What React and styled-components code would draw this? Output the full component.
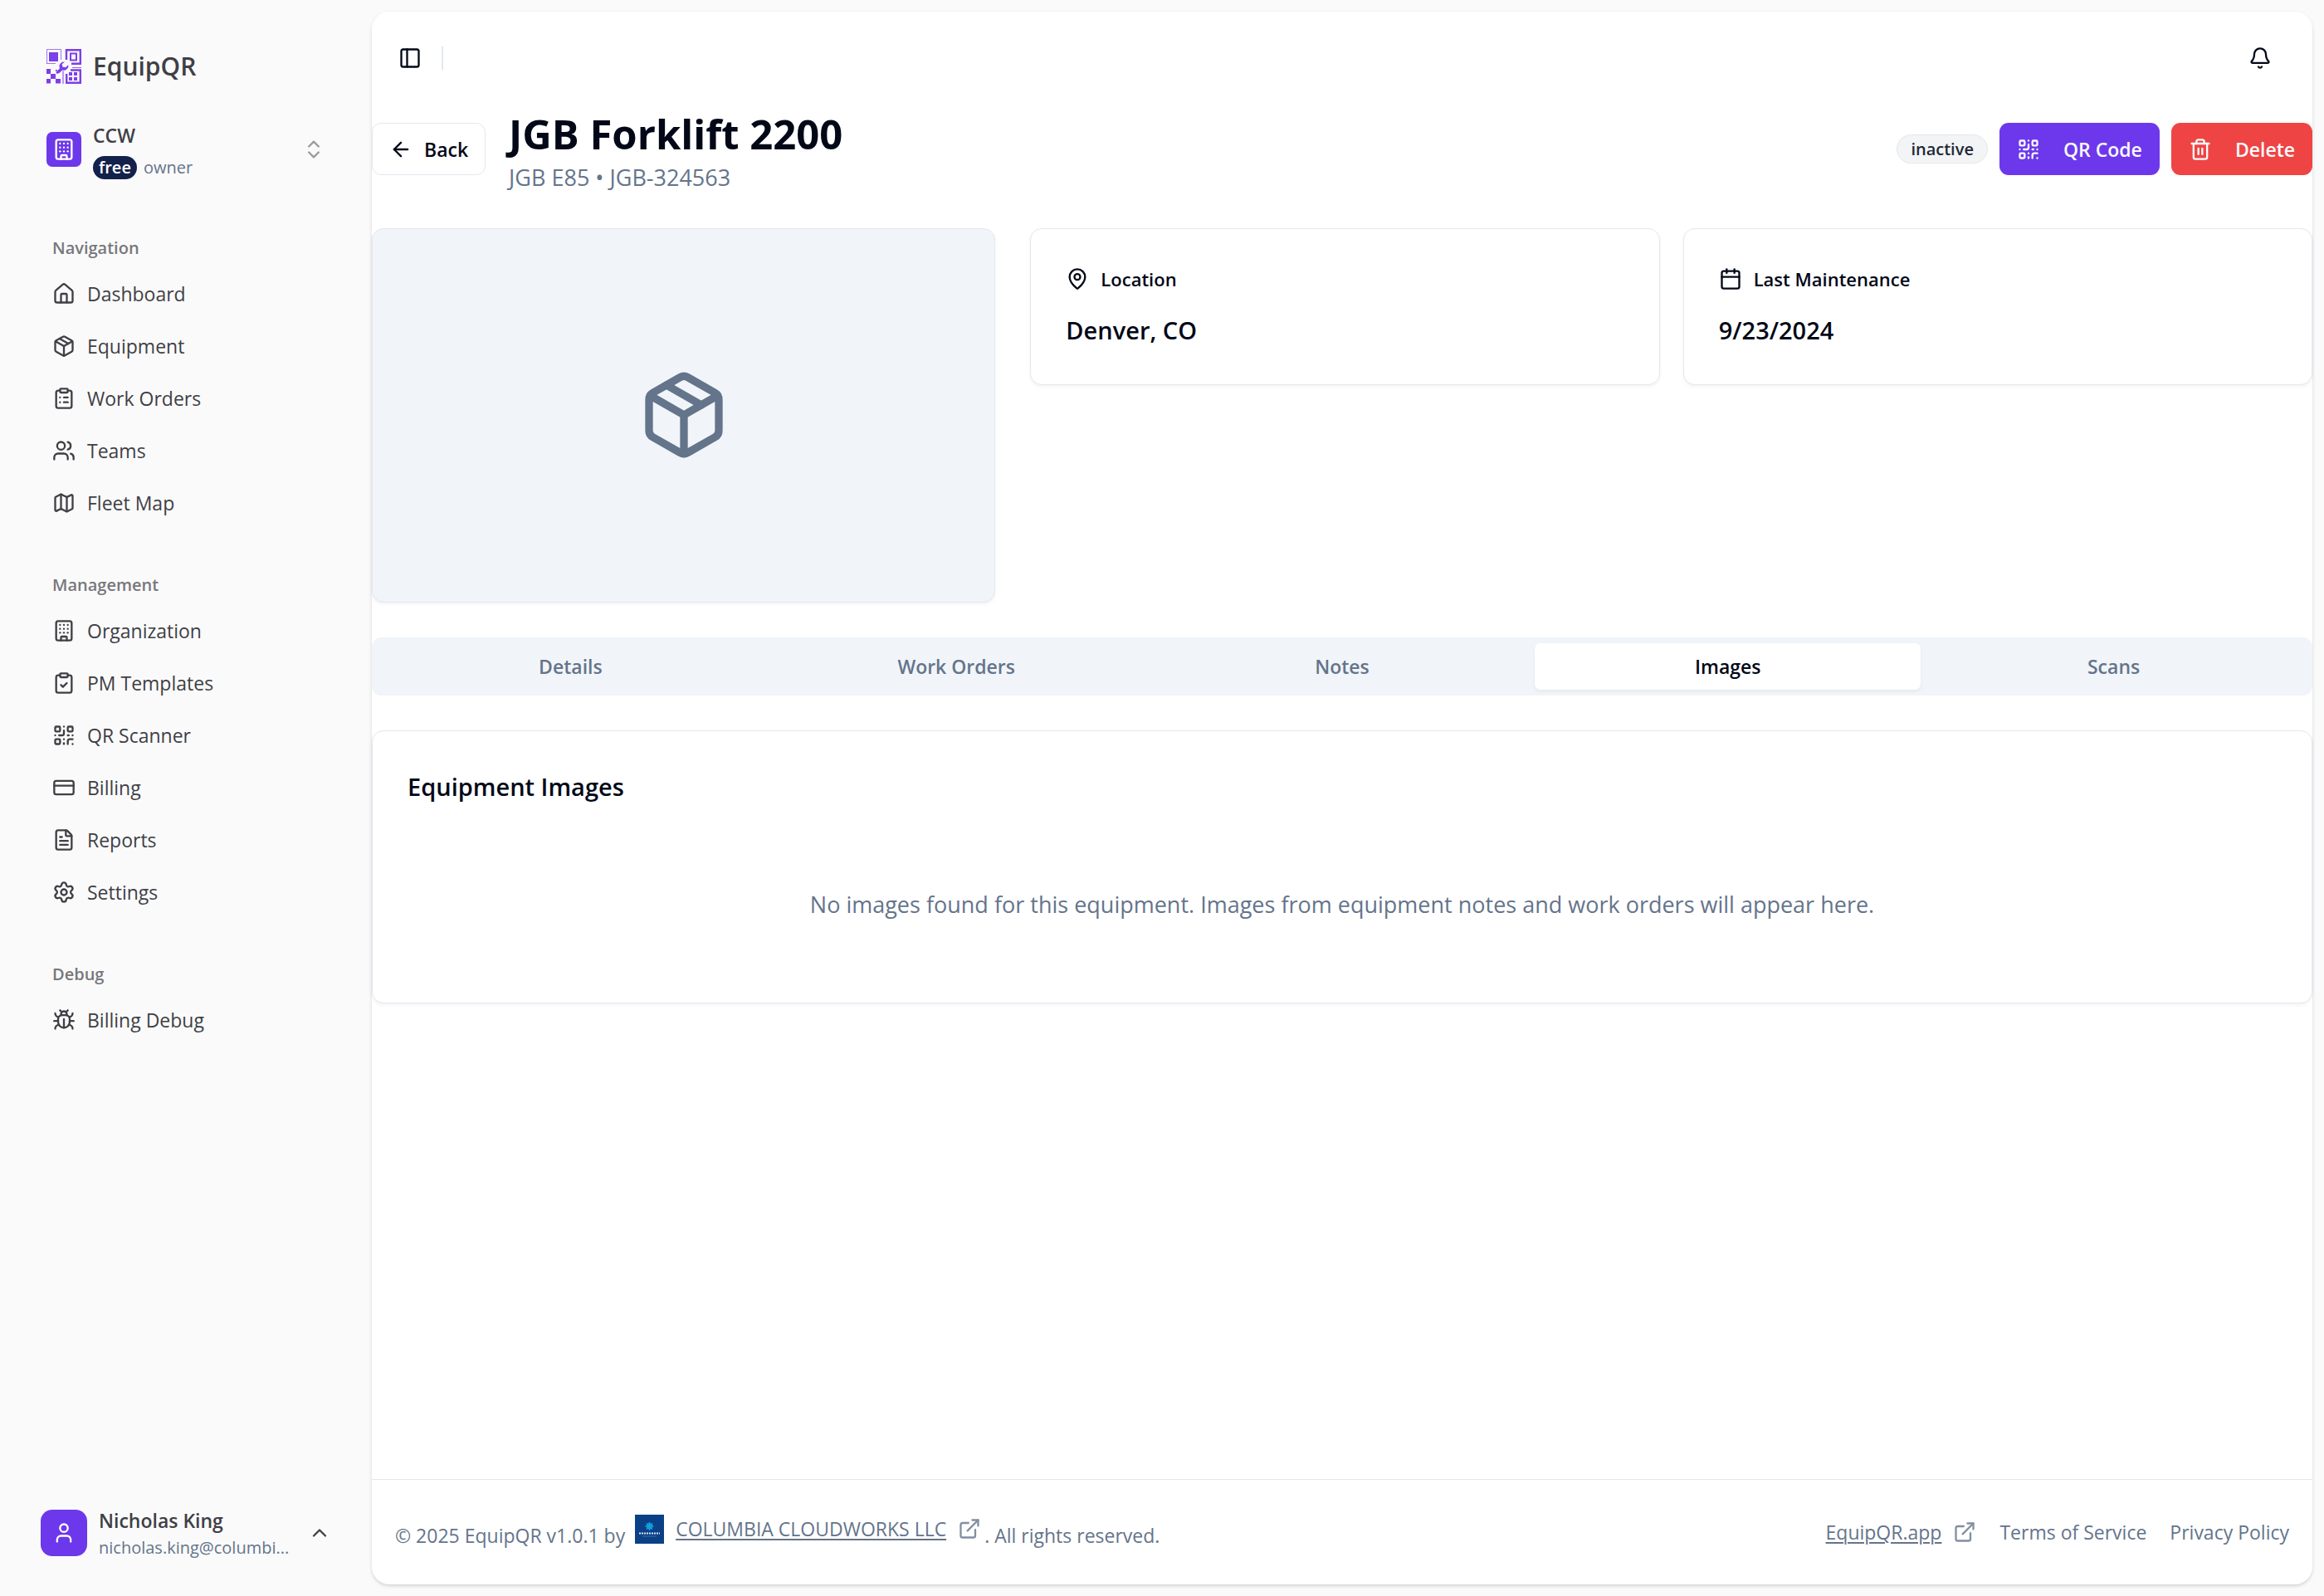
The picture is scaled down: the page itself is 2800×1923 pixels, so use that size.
import React from "react";
import styled, { createGlobalStyle, css } from "styled-components";
import {
  House, Package, ClipboardList, Users, Map, Building, ClipboardCheck, QrCode, CreditCard,
  FileText, Settings, Bug, PanelLeft, Bell, ArrowLeft, Trash2, MapPin, Calendar,
  ChevronsUpDown, ChevronUp, User, ExternalLink,
} from "lucide-react";

const c = {
  page: "#fafafa",
  side: "#3f3f46",
  text: "#020817",
  muted: "#64748b",
  border: "#e2e8f0",
  soft: "#f1f5f9",
  primary: "#6d38eb",
  danger: "#ef4444",
};

const GlobalStyle = createGlobalStyle`
  *, *::before, *::after { box-sizing: border-box; }
  body {
    margin: 0;
    background: ${c.page};
    color: ${c.text};
    font-family: "Open Sans", "Noto Sans", sans-serif;
    font-size: 27px;
    line-height: 42px;
  }
  h1, h2, h3, p, ul { margin: 0; padding: 0; }
  button { font: inherit; color: inherit; border: 0; background: none; padding: 0; text-align: left; }
  a { color: inherit; text-decoration: none; }
  svg { flex: none; display: block; }
`;

const Shell = styled.div`
  display: flex;
  min-height: 100vh;
`;

/* Sidebar */
const Sidebar = styled.aside`
  display: flex;
  flex-direction: column;
  flex: none;
  width: 448px;
  padding: 45px 42px 43px 49px;
  color: ${c.side};
`;
const Brand = styled.a`
  display: flex;
  align-items: center;
  gap: 14px;
  height: 70px;
  padding-left: 7px;
  font-size: 30px;
  font-weight: 600;
`;
const OrgButton = styled.button`
  display: flex;
  align-items: center;
  gap: 14px;
  height: 84px;
  margin-top: 23px;
  padding: 0 14px 0 7px;
`;
const Tile = styled.span`
  display: grid;
  place-items: center;
  flex: none;
  width: ${(p) => p.$size}px;
  height: ${(p) => p.$size}px;
  border-radius: ${(p) => p.$radius}px;
  background: ${c.primary};
  color: #fff;
`;
const Lines = styled.span`
  display: flex;
  flex-direction: column;
  gap: ${(p) => p.$gap || 0}px;
  flex: 1;
  min-width: 0;
`;
const OrgName = styled.span`
  font-size: 23px;
  font-weight: 600;
  line-height: 36px;
`;
const OrgMeta = styled.span`
  display: flex;
  align-items: center;
  gap: 8px;
  color: ${c.muted};
  font-size: 20px;
  font-weight: 500;
  line-height: 28px;
`;
const PlanBadge = styled.span`
  padding: 0 7px;
  border-radius: 14px;
  background: #13214b;
  color: #fff;
  font-weight: 600;
`;
const NavGroups = styled.nav`
  display: flex;
  flex-direction: column;
  gap: 42px;
  margin-top: 48px;
`;
const GroupLabel = styled.h2`
  height: 56px;
  padding-left: 14px;
  color: #77777c;
  font-size: 20px;
  font-weight: 600;
  line-height: 58px;
`;
const NavList = styled.ul`
  display: grid;
  gap: 7px;
  list-style: none;
`;
const NavLink = styled.a`
  display: flex;
  align-items: center;
  gap: 14px;
  height: 56px;
  padding: 0 14px;
  font-size: 23px;
`;
const UserButton = styled.button`
  display: flex;
  align-items: center;
  gap: 14px;
  margin-top: auto;
  padding-right: 7px;
`;
const UserName = styled.span`
  font-size: 23px;
  font-weight: 600;
  line-height: 36px;
`;
const UserMail = styled.span`
  color: ${c.muted};
  font-size: 20px;
  line-height: 30px;
  white-space: nowrap;
`;

/* Main panel */
const Panel = styled.div`
  display: flex;
  flex: 1;
  flex-direction: column;
  min-width: 0;
  margin: 14px 14px 14px 0;
  border-radius: 21px;
  background: #fff;
  box-shadow: 0 2px 5px rgba(0, 0, 0, 0.1), 0 2px 4px -2px rgba(0, 0, 0, 0.15);
`;
const TopBar = styled.header`
  display: flex;
  align-items: center;
  gap: 24px;
  height: 112px;
  padding: 0 49px 0 32px;
`;
const Divider = styled.span`
  width: 2px;
  height: 28px;
  background: ${c.border};
`;
const IconButton = styled.button`
  ${(p) => p.$end && css`margin-left: auto;`}
`;
const Content = styled.main`
  display: flex;
  flex: 1;
  flex-direction: column;
  gap: 42px;
`;
const TitleRow = styled.div`
  display: flex;
  align-items: center;
  gap: 28px;
  height: 107px;
`;
const Actions = styled.div`
  display: flex;
  align-items: center;
  gap: 14px;
  margin-left: auto;
`;
const Title = styled.h1`
  font-size: 49px;
  font-weight: 700;
  line-height: 68px;
`;
const Subtitle = styled.p`
  color: ${c.muted};
  line-height: 38px;
`;
const tones = {
  outline: css`border: 1px solid ${c.border}; background: #fff; gap: 14px; padding: 0 20px;`,
  primary: css`background: ${c.primary}; color: #f8fafc;`,
  danger: css`background: ${c.danger}; color: #f8fafc;`,
};
const Button = styled.button`
  display: flex;
  align-items: center;
  gap: 28px;
  height: 63px;
  padding: 0 21px;
  border-radius: 11px;
  font-size: 23px;
  font-weight: 600;
  white-space: nowrap;
  ${(p) => tones[p.$tone]}
`;
const StatusBadge = styled.span`
  padding: 0 16px;
  border: 1px solid #e5e7eb;
  border-radius: 18px;
  background: #f3f4f6;
  color: #1f2937;
  font-size: 20px;
  font-weight: 600;
  line-height: 33px;
`;
const cardFrame = css`
  border: 1px solid ${c.border};
  border-radius: 14px;
  box-shadow: 0 2px 4px rgba(0, 0, 0, 0.05);
`;
const Overview = styled.section`
  display: grid;
  grid-template-columns: repeat(3, minmax(0, 1fr));
  gap: 42px;
`;
const Placeholder = styled.div`
  ${cardFrame}
  display: grid;
  place-items: center;
  aspect-ratio: 5 / 3;
  background: ${c.soft};
  color: ${c.muted};
`;
const Facts = styled.div`
  display: grid;
  grid-column: span 2;
  grid-template-columns: 1fr 1fr;
  align-items: start;
  gap: 28px;
`;
const Card = styled.section`
  ${cardFrame}
  padding: 42px;
  background: #fff;
`;
const FactLabel = styled.h3`
  display: flex;
  align-items: center;
  gap: 14px;
  font-size: 22px;
  font-weight: 600;
  line-height: 36px;
`;
const FactValue = styled.p`
  margin-top: 20px;
  font-size: 29px;
  font-weight: 600;
  line-height: 47px;
`;
const TabList = styled.div`
  display: grid;
  grid-template-columns: repeat(5, 1fr);
  padding: 7px;
  border-radius: 11px;
  background: ${c.soft};
`;
const Tab = styled.button`
  height: 56px;
  border-radius: 7px;
  color: ${c.muted};
  font-size: 23px;
  font-weight: 600;
  text-align: center;
  ${(p) => p["aria-selected"] && css`
    background: #fff;
    color: ${c.text};
    box-shadow: 0 2px 4px rgba(0, 0, 0, 0.06);
  `}
`;
const CardTitle = styled.h2`
  font-size: 29px;
  font-weight: 600;
  line-height: 50px;
`;
const Empty = styled.p`
  padding: 96px 0 55px;
  color: ${c.muted};
  text-align: center;
`;
const Footer = styled.footer`
  display: flex;
  align-items: center;
  justify-content: space-between;
  height: 127px;
  padding: 0 28px;
  border-top: 1px solid ${c.border};
  color: ${c.muted};
  font-size: 23px;
`;
const Copyright = styled.p`
  display: flex;
  align-items: flex-end;
  line-height: 38px;
`;
const CompanyLink = styled.a`
  display: flex;
  align-items: center;
  gap: 14px;
  margin: 0 4px 8px 12px;
`;
const FooterLinks = styled.nav`
  display: flex;
  gap: 28px;
`;
const OutLink = styled.a`
  display: flex;
  align-items: center;
  gap: 14px;
`;
const Underlined = styled.span`
  text-decoration: underline;
  text-decoration-thickness: 2px;
  text-underline-offset: 3px;
`;

const BrandMark = () => (
  <svg width="42" height="42" viewBox="0 0 42 42" fill="#7c3fe8" aria-hidden="true">
    <path d="M.500 18V.500H17.500V13M.500 17.500H11" fill="none" stroke="#7c3fe8" opacity="0.7" />
    <path d="M3 4h11v11H3z" />
    <path d="M24 13V1.200H40.800V17.800H30" fill="none" stroke="#7c3fe8" strokeWidth="2.400" />
    <path d="M29 5.500h7v8h-7z" fill="none" stroke="#7c3fe8" strokeWidth="2" />
    <path d="M31 22.500H42" fill="none" stroke="#7c3fe8" opacity="0.8" />
    <path d="M29 25.500H40.800V40.800H24.200V30" fill="none" stroke="#7c3fe8" strokeWidth="2.400" />
    <path d="M27 28h4v4h-4zM33 28h4v4h-4zM27 34h4v4h-4zM33 34h4v4h-4zM19.500 25v17h1V25z" />
    <path d="M0 24h5v6H0zM5 30h6v6H5zM0 36h5v5.500H0zM11 36h6v5.500h-6zM11 25h3v4h-3z" />
    <path d="M23 15.500a6 6 0 0 0-7.500 8L11 28l1.500 2.500L16 29l3-3a6 6 0 0 0 7.500-7.500l-3.500 3.300-3.300-.6-.6-3z" stroke="#fafafa" strokeWidth="0.800" />
  </svg>
);

const CompanyMark = () => (
  <svg width="35" height="35" viewBox="0 0 35 35" aria-hidden="true">
    <rect width="35" height="35" fill="#0a4186" />
    <g stroke="#16a0e0" strokeWidth="1.300" fill="none">
      <circle cx="17.500" cy="14" r="3" />
      <path d="M17.500 9v10M12.500 14h10M14 10.500l7 7M21 10.500l-7 7" />
    </g>
    <path d="M5 22.500h25" stroke="#dbe7f5" strokeWidth="2" strokeDasharray="2 1" />
    <path d="M9 26h17" stroke="#3f6da6" strokeWidth="1" />
  </svg>
);

const groups = [
  ["Navigation", [["Dashboard", House], ["Equipment", Package], ["Work Orders", ClipboardList], ["Teams", Users], ["Fleet Map", Map]]],
  ["Management", [["Organization", Building], ["PM Templates", ClipboardCheck], ["QR Scanner", QrCode], ["Billing", CreditCard], ["Reports", FileText], ["Settings", Settings]]],
  ["Debug", [["Billing Debug", Bug]]],
];
const tabs = ["Details", "Work Orders", "Notes", "Images", "Scans"];
const facts = [
  ["Location", "Denver, CO", MapPin],
  ["Last Maintenance", "9/23/2024", Calendar],
];

export default function App() {
  const [active, setActive] = React.useState("Images");
  return (
    <>
      <GlobalStyle />
      <Shell>
        <Sidebar>
          <Brand href="#"><BrandMark />EquipQR</Brand>
          <OrgButton>
            <Tile $size={42} $radius={7}><Building size={28} /></Tile>
            <Lines $gap={7}>
              <OrgName>CCW</OrgName>
              <OrgMeta><PlanBadge>free</PlanBadge>owner</OrgMeta>
            </Lines>
            <ChevronsUpDown size={28} opacity={0.5} />
          </OrgButton>
          <NavGroups>
            {groups.map(([label, items]) => (
              <section key={label}>
                <GroupLabel>{label}</GroupLabel>
                <NavList>
                  {items.map(([name, Icon]) => (
                    <li key={name}><NavLink href="#"><Icon size={28} />{name}</NavLink></li>
                  ))}
                </NavList>
              </section>
            ))}
          </NavGroups>
          <UserButton>
            <Tile $size={56} $radius={14}><User size={28} /></Tile>
            <Lines>
              <UserName>Nicholas King</UserName>
              <UserMail>nicholas.king@columbi...</UserMail>
            </Lines>
            <ChevronUp size={28} />
          </UserButton>
        </Sidebar>

        <Panel>
          <TopBar>
            <IconButton aria-label="Toggle sidebar"><PanelLeft size={28} /></IconButton>
            <Divider />
            <IconButton $end aria-label="Notifications"><Bell size={28} /></IconButton>
          </TopBar>
          <Content>
            <TitleRow>
              <Button $tone="outline"><ArrowLeft size={28} />Back</Button>
              <div>
                <Title>JGB Forklift 2200</Title>
                <Subtitle>JGB E85 • JGB-324563</Subtitle>
              </div>
              <Actions>
                <StatusBadge>inactive</StatusBadge>
                <Button $tone="primary"><QrCode size={28} />QR Code</Button>
                <Button $tone="danger"><Trash2 size={28} />Delete</Button>
              </Actions>
            </TitleRow>
            <Overview>
              <Placeholder><Package size={112} /></Placeholder>
              <Facts>
                {facts.map(([label, value, Icon]) => (
                  <Card key={label}>
                    <FactLabel><Icon size={28} />{label}</FactLabel>
                    <FactValue>{value}</FactValue>
                  </Card>
                ))}
              </Facts>
            </Overview>
            <TabList role="tablist">
              {tabs.map((t) => (
                <Tab key={t} role="tab" aria-selected={t === active} onClick={() => setActive(t)}>{t}</Tab>
              ))}
            </TabList>
            <Card>
              <CardTitle>Equipment Images</CardTitle>
              <Empty>No images found for this equipment. Images from equipment notes and work orders will appear here.</Empty>
            </Card>
          </Content>
          <Footer>
            <Copyright>
              © 2025 EquipQR v1.0.1 by
              <CompanyLink href="#">
                <CompanyMark />
                <Underlined>COLUMBIA CLOUDWORKS LLC</Underlined>
                <ExternalLink size={28} opacity={0.8} />
              </CompanyLink>
              . All rights reserved.
            </Copyright>
            <FooterLinks>
              <OutLink href="#"><Underlined>EquipQR.app</Underlined><ExternalLink size={28} opacity={0.8} /></OutLink>
              <a href="#">Terms of Service</a>
              <a href="#">Privacy Policy</a>
            </FooterLinks>
          </Footer>
        </Panel>
      </Shell>
    </>
  );
}
